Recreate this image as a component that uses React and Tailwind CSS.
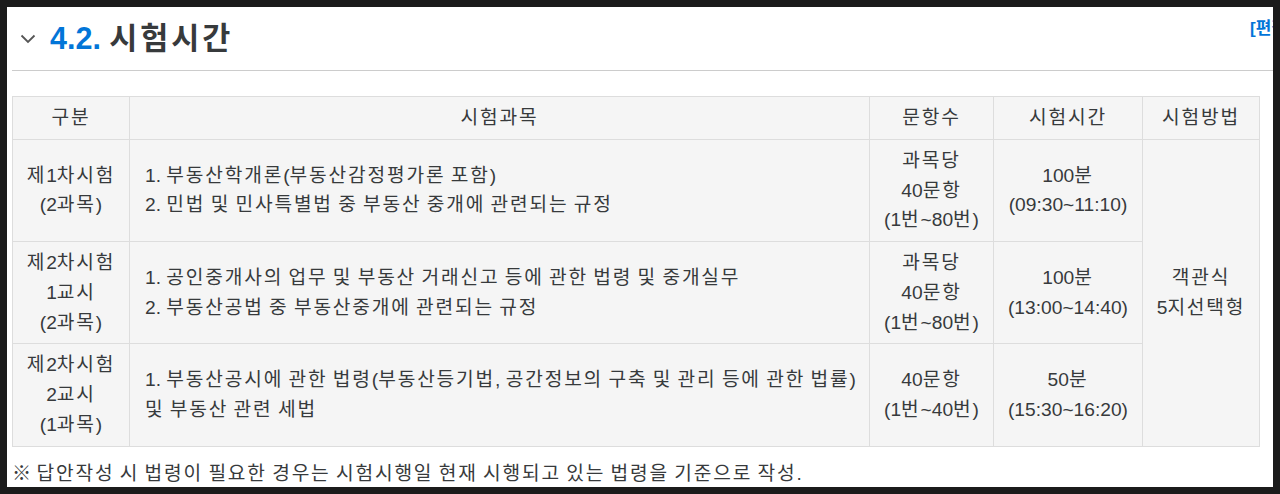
import React from "react";

const font = { fontFamily: '"Liberation Sans", "Noto Sans CJK KR", sans-serif' };

// Hangul runs get a little extra tracking to match the wider Hangul face of the reference.
function T({ children }) {
  const parts = String(children).split(/([\uAC00-\uD7A3]+)/);
  return (
    <>
      {parts.map((p, i) =>
        /[\uAC00-\uD7A3]/.test(p) ? (
          <span key={i} className="tracking-[0.095em]">
            {p}
          </span>
        ) : (
          <React.Fragment key={i}>{p}</React.Fragment>
        )
      )}
    </>
  );
}

function Lines({ lines }) {
  return (
    <>
      {lines.map((l, i) => (
        <React.Fragment key={i}>
          {i > 0 && <br />}
          <T>{l}</T>
        </React.Fragment>
      ))}
    </>
  );
}

function Cell({ children, className = "", ...rest }) {
  return (
    <td
      {...rest}
      className={`border border-[#dddddd] bg-[#f5f5f5] px-[5px] py-[6px] align-middle ${className}`}
    >
      {children}
    </td>
  );
}

export default function App() {
  return (
    <div className="w-[1280px] h-[494px] bg-[#1b1b1b] p-[7px]" style={font}>
      <div className="w-full h-full bg-white overflow-hidden text-[#373a3c]">
        <div className="ml-[5px] h-[64px] border-b border-[#cccccc] flex items-center pl-[8px]">
          <svg width="16" height="10" viewBox="0 0 16 10" className="shrink-0">
            <path d="M1.5 1.5 L8 8 L14.5 1.5" fill="none" stroke="#555555" strokeWidth="1.8" />
          </svg>
          <h2 className="ml-[14px] text-[30.5px] font-bold leading-none whitespace-nowrap">
            <span className="text-[#0275d8]">4.2.</span> <T>시험시간</T>
          </h2>
          <div className="ml-auto self-start mt-[10px] w-[23px] shrink-0 whitespace-nowrap text-[17px] font-bold leading-[24px] text-[#0275d8]">
            [편집]
          </div>
        </div>

        <table className="ml-[5px] mt-[25px] w-[1247px] table-fixed border-collapse text-[19.2px] leading-[29.75px]">
          <colgroup>
            <col className="w-[117px]" />
            <col className="w-[740px]" />
            <col className="w-[124px]" />
            <col className="w-[149px]" />
            <col className="w-[117px]" />
          </colgroup>
          <tbody>
            <tr className="text-center">
              <Cell><T>구분</T></Cell>
              <Cell><T>시험과목</T></Cell>
              <Cell><T>문항수</T></Cell>
              <Cell><T>시험시간</T></Cell>
              <Cell><T>시험방법</T></Cell>
            </tr>
            <tr>
              <Cell className="text-center">
                <Lines lines={["제1차시험", "(2과목)"]} />
              </Cell>
              <Cell className="pl-[15px] whitespace-nowrap">
                <Lines
                  lines={[
                    "1. 부동산학개론(부동산감정평가론 포함)",
                    "2. 민법 및 민사특별법 중 부동산 중개에 관련되는 규정",
                  ]}
                />
              </Cell>
              <Cell className="text-center">
                <Lines lines={["과목당", "40문항", "(1번~80번)"]} />
              </Cell>
              <Cell className="text-center">
                <Lines lines={["100분", "(09:30~11:10)"]} />
              </Cell>
              <Cell className="text-center" rowSpan={3}>
                <Lines lines={["객관식", "5지선택형"]} />
              </Cell>
            </tr>
            <tr>
              <Cell className="text-center">
                <Lines lines={["제2차시험", "1교시", "(2과목)"]} />
              </Cell>
              <Cell className="pl-[15px] whitespace-nowrap">
                <Lines
                  lines={[
                    "1. 공인중개사의 업무 및 부동산 거래신고 등에 관한 법령 및 중개실무",
                    "2. 부동산공법 중 부동산중개에 관련되는 규정",
                  ]}
                />
              </Cell>
              <Cell className="text-center">
                <Lines lines={["과목당", "40문항", "(1번~80번)"]} />
              </Cell>
              <Cell className="text-center">
                <Lines lines={["100분", "(13:00~14:40)"]} />
              </Cell>
            </tr>
            <tr>
              <Cell className="text-center">
                <Lines lines={["제2차시험", "2교시", "(1과목)"]} />
              </Cell>
              <Cell className="pl-[15px] whitespace-nowrap">
                <Lines
                  lines={[
                    "1. 부동산공시에 관한 법령(부동산등기법, 공간정보의 구축 및 관리 등에 관한 법률)",
                    "및 부동산 관련 세법",
                  ]}
                />
              </Cell>
              <Cell className="text-center">
                <Lines lines={["40문항", "(1번~40번)"]} />
              </Cell>
              <Cell className="text-center">
                <Lines lines={["50분", "(15:30~16:20)"]} />
              </Cell>
            </tr>
          </tbody>
        </table>

        <p className="ml-[5px] mt-[12px] text-[19.2px] leading-[29.75px] whitespace-nowrap">
          <T>※ 답안작성 시 법령이 필요한 경우는 시험시행일 현재 시행되고 있는 법령을 기준으로 작성.</T>
        </p>
      </div>
    </div>
  );
}
